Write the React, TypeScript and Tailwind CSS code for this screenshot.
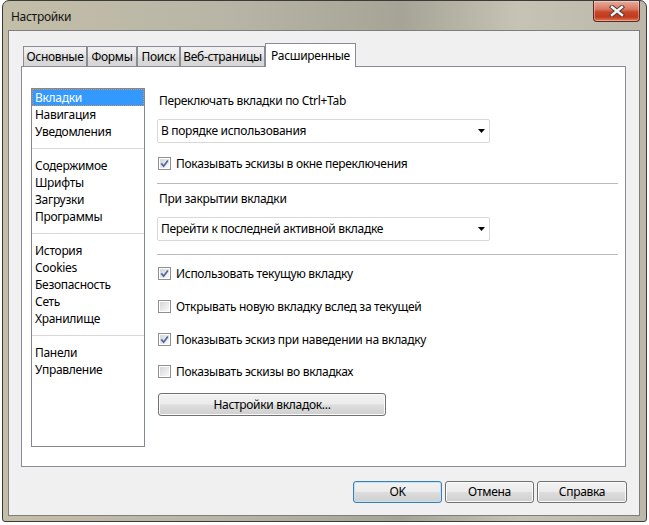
import React from 'react';

const Check = ({ checked }: { checked?: boolean }) => (
  <span className="flex h-[13px] w-[13px] shrink-0 border border-[#8e8f8f] bg-white p-px">
    <span className="flex h-full w-full items-center justify-center bg-[linear-gradient(135deg,#d3d6da,#f9f9f9)]">
      {checked && (
        <svg width="9" height="9" viewBox="0 0 9 9">
          <path d="M1.3 4.4 L3.6 7.2 L7.9 1.4" fill="none" stroke="#4a66a0" strokeWidth="1.7" />
        </svg>
      )}
    </span>
  </span>
);

const CheckRow = ({ checked, label, className }: { checked?: boolean; label: string; className: string }) => (
  <div className={`flex h-[17px] items-center pl-px ${className}`}>
    <Check checked={checked} />
    <span className="ml-[5px] whitespace-nowrap">{label}</span>
  </div>
);

const Dropdown = ({ value, className }: { value: string; className: string }) => (
  <div className={`flex h-[24px] w-[333px] items-center justify-between rounded-[2px] border border-[#d9d9d9] bg-white pl-[3px] pr-[4px] ${className}`}>
    <span className="whitespace-nowrap">{value}</span>
    <svg width="7" height="4" viewBox="0 0 7 4">
      <path d="M0 0 H7 L3.5 4 Z" fill="#000" />
    </svg>
  </div>
);

const WinButton = ({ label, className, focused }: { label: string; className: string; focused?: boolean }) => (
  <div
    className={`flex items-center justify-center rounded-[3px] border bg-[linear-gradient(#f2f2f2_0%,#ebebeb_48%,#dddddd_52%,#cfcfcf_100%)] ${
      focused ? 'border-[#3c7fb1] shadow-[inset_0_0_0_1px_#bfe3f6]' : 'border-[#707070] shadow-[inset_0_0_0_1px_#fbfbfb]'
    } ${className}`}
  >
    {label}
  </div>
);

const tabs = [
  { label: 'Основные', w: 'w-[64px]' },
  { label: 'Формы', w: 'w-[50px]' },
  { label: 'Поиск', w: 'w-[43px]' },
  { label: 'Веб-страницы', w: 'w-[85px]' },
];

const groups = [
  ['Вкладки', 'Навигация', 'Уведомления'],
  ['Содержимое', 'Шрифты', 'Загрузки', 'Программы'],
  ['История', 'Cookies', 'Безопасность', 'Сеть', 'Хранилище'],
  ['Панели', 'Управление'],
];

export default function App() {
  return (
    <div className="h-[525px] w-[649px] bg-white font-['Noto_Sans',sans-serif] text-[12px] tracking-[-0.3px] text-black">
      <div className="ml-[2px] flex h-[522px] w-[645px] flex-col rounded-t-[7px] rounded-b-[3px] border border-[#3b3b3b] bg-[linear-gradient(90deg,#c3bea8_0%,#b8b5a6_35%,#a6a496_62%,#c6c3b5_80%,#bbb8aa_100%)]">
        {/* title bar */}
        <div className="flex h-[29px] items-start pl-[8px] pr-[6px]">
          <span className="mt-[8px] leading-[16px] text-[#111]">Настройки</span>
          <div className="ml-auto flex h-[21px] w-[47px] items-center justify-center rounded-b-[4px] border border-t-0 border-[#5a2a22] bg-[linear-gradient(#e8ab9d_0%,#d97a62_40%,#c8452a_55%,#c23a1e_80%,#df7b52_100%)] shadow-[inset_0_0_0_1px_rgba(255,255,255,0.35)]">
            <svg width="16" height="12" viewBox="0 0 16 12">
              <path d="M3 2 L13 10 M13 2 L3 10" stroke="#4a3a36" strokeWidth="4.2" strokeLinecap="square" />
              <path d="M3 2 L13 10 M13 2 L3 10" stroke="#f4f4f4" strokeWidth="2.4" strokeLinecap="square" />
            </svg>
          </div>
        </div>

        {/* client area */}
        <div className="mb-[5px] ml-[5px] mr-[6px] flex flex-1 flex-col border border-[#7e7e7e] bg-[#f0f0f0] pl-[12px] pt-[12px]">
          {/* tabs */}
          <div className="flex h-[23px] items-end pl-[2px]">
            {tabs.map((t) => (
              <div
                key={t.label}
                className={`flex h-[20px] items-center justify-center whitespace-nowrap border border-b-0 border-[#898c95] bg-[linear-gradient(#f3f3f3,#e4e4e4_50%,#dcdcdc_51%,#d5d5d5)] pt-px ${t.w}`}
              >
                {t.label}
              </div>
            ))}
            <div className="relative z-10 -mb-px flex h-[24px] w-[91px] items-start justify-center border border-b-0 border-[#898c95] bg-white pt-[3px]">
              Расширенные
            </div>
          </div>

          {/* panel */}
          <div className="flex h-[401px] w-[605px] border border-[#898c95] bg-white">
            {/* list */}
            <div className="ml-[9px] mt-[21px] flex h-[359px] w-[114px] flex-col border border-[#828790] bg-white">
              {groups.map((g, gi) => (
                <div key={gi} className="flex flex-col">
                  {gi > 0 && <div className="my-[8px] h-px bg-[#d9d9d9]" />}
                  {g.map((item) => (
                    <div
                      key={item}
                      className={`h-[17px] whitespace-nowrap pl-[3px] leading-[17px] ${
                        item === 'Вкладки' ? 'bg-[#3399ff] text-white outline-1 -outline-offset-1 outline-dotted outline-[#d8904a]' : ''
                      }`}
                    >
                      {item}
                    </div>
                  ))}
                </div>
              ))}
            </div>

            {/* settings */}
            <div className="ml-[12px] flex w-[461px] flex-col">
              <div className="ml-[2px] mt-[25px] h-[17px] leading-[17px]">Переключать вкладки по Ctrl+Tab</div>
              <Dropdown value="В порядке использования" className="mt-[10px]" />
              <CheckRow checked label="Показывать эскизы в окне переключения" className="mt-[12px]" />
              <div className="mt-[11px] h-px bg-[#b9b9b9]" />
              <div className="ml-[2px] mt-[6px] h-[17px] leading-[17px]">При закрытии вкладки</div>
              <Dropdown value="Перейти к последней активной вкладке" className="mt-[10px]" />
              <div className="mt-[13px] h-px bg-[#b9b9b9]" />
              <CheckRow checked label="Использовать текущую вкладку" className="mt-[10px]" />
              <CheckRow label="Открывать новую вкладку вслед за текущей" className="mt-[16px]" />
              <CheckRow checked label="Показывать эскиз при наведении на вкладку" className="mt-[16px]" />
              <CheckRow label="Показывать эскизы во вкладках" className="mt-[15px]" />
              <WinButton label="Настройки вкладок..." className="ml-px mt-[13px] h-[23px] w-[228px]" />
            </div>
          </div>

          {/* bottom buttons */}
          <div className="mt-[14px] flex justify-end gap-[3px] pr-[12px]">
            <WinButton focused label="OK" className="h-[22px] w-[89px]" />
            <WinButton label="Отмена" className="h-[22px] w-[89px]" />
            <WinButton label="Справка" className="h-[22px] w-[90px]" />
          </div>
        </div>
      </div>
    </div>
  );
}
